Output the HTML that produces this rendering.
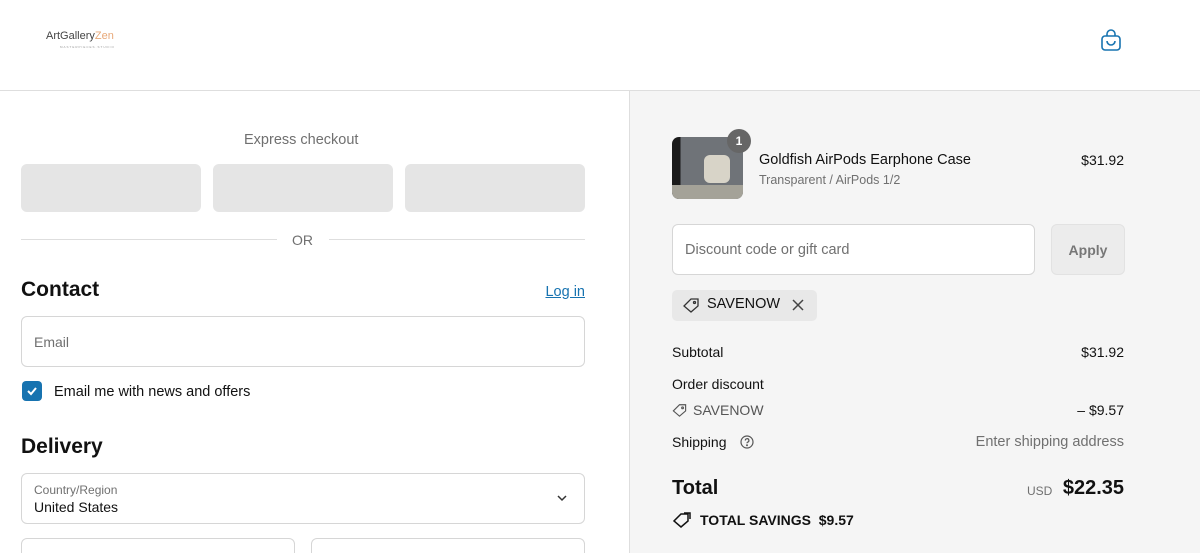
<!DOCTYPE html>
<html><head><style>
*{box-sizing:border-box;margin:0;padding:0}
html,body{width:1200px;height:553px;overflow:hidden}
body{font-family:"Liberation Sans",sans-serif;color:#000;background:#fff;position:relative}
.abs{position:absolute}
.r{position:absolute;right:76px;text-align:right}
.hdr{left:0;top:0;width:1200px;height:91px;border-bottom:1px solid #dedede;background:#fff}
.right{left:629px;top:91px;width:571px;height:462px;background:#f5f5f5;border-left:1px solid #dedede}
.btn{background:#e5e5e5;border-radius:6px;height:48px;top:164px;width:180px}
.inp{border:1px solid #d6d6d6;border-radius:6px;background:#fff}
.t{font-size:14px;color:#333}
</style></head><body>
<div class="abs hdr"></div>
<div class="abs" style="left:46px;top:30px;font-size:11px;color:#444">ArtGallery<span style="color:#e8a878">Zen</span></div>
<div class="abs" style="left:60px;top:45px;font-size:3px;color:#999;letter-spacing:1px">MASTERPIECES·STUDIO</div>
<svg class="abs" style="left:1100px;top:28px" width="22" height="24" viewBox="0 0 22 24" fill="none" stroke="#1773b0" stroke-width="1.6"><path d="M7 8V6a4 4 0 0 1 8 0v2"/><rect x="2" y="8" width="18" height="14" rx="3"/><path d="M7 13a4 4 0 0 0 8 0"/></svg>

<div class="abs" style="left:244px;top:132px;font-size:14.5px;color:#707070">Express checkout</div>
<div class="abs btn" style="left:21px"></div>
<div class="abs btn" style="left:213px"></div>
<div class="abs btn" style="left:405px"></div>
<div class="abs" style="left:21px;top:239px;width:256px;border-top:1px solid #dedede"></div>
<div class="abs" style="left:329px;top:239px;width:256px;border-top:1px solid #dedede"></div>
<div class="abs" style="left:292px;top:232px;font-size:14px;color:#707070">OR</div>
<div class="abs" style="left:21px;top:278px;font-size:21px;font-weight:bold;color:#111">Contact</div>
<div class="abs" style="right:615px;top:284px;font-size:14.5px;color:#1773b0;text-decoration:underline">Log in</div>
<div class="abs inp" style="left:21px;top:316px;width:564px;height:51px"></div>
<div class="abs" style="left:34px;top:334px;font-size:14px;color:#707070">Email</div>
<div class="abs" style="left:22px;top:381px;width:20px;height:20px;background:#1773b0;border-radius:4px"></div>
<svg class="abs" style="left:25px;top:384px" width="14" height="14" viewBox="0 0 14 14" fill="none" stroke="#fff" stroke-width="2"><path d="M3 7l3 3 5-6"/></svg>
<div class="abs t" style="left:54px;top:384px;color:#111;font-size:14.5px">Email me with news and offers</div>
<div class="abs" style="left:21px;top:435px;font-size:21px;font-weight:bold;color:#111">Delivery</div>
<div class="abs inp" style="left:21px;top:473px;width:564px;height:51px"></div>
<div class="abs" style="left:34px;top:483px;font-size:12px;color:#707070">Country/Region</div>
<div class="abs" style="left:34px;top:499px;font-size:14px;color:#111">United States</div>
<svg class="abs" style="left:555px;top:493px" width="14" height="10" viewBox="0 0 14 10" fill="none" stroke="#333" stroke-width="1.5"><path d="M3 3l4 4 4-4"/></svg>
<div class="abs inp" style="left:21px;top:538px;width:274px;height:40px"></div>
<div class="abs inp" style="left:311px;top:538px;width:274px;height:40px"></div>

<div class="abs right"></div>
<div class="abs" style="left:672px;top:137px;width:71px;height:62px;border-radius:7px;background:linear-gradient(90deg,#1a1a1a 0 12%,#6f7378 12% 100%);overflow:hidden"><div style="position:absolute;left:32px;top:18px;width:26px;height:28px;background:#d8d4c8;border-radius:6px"></div><div style="position:absolute;left:0;top:48px;width:71px;height:14px;background:#a4a298"></div></div>
<div class="abs" style="left:727px;top:129px;width:24px;height:24px;border-radius:12px;background:#666;color:#fff;font-size:12px;font-weight:bold;text-align:center;line-height:24px">1</div>
<div class="abs" style="left:759px;top:152px;font-size:14.5px;color:#111">Goldfish AirPods Earphone Case</div>
<div class="abs" style="left:759px;top:173px;font-size:12.5px;color:#707070">Transparent / AirPods 1/2</div>
<div class="r t" style="top:152px;color:#111">$31.92</div>
<div class="abs inp" style="left:672px;top:224px;width:363px;height:51px"></div>
<div class="abs" style="left:685px;top:242px;font-size:14.5px;color:#707070">Discount code or gift card</div>
<div class="abs" style="left:1051px;top:224px;width:74px;height:51px;background:#ececec;border:1px solid #e2e2e2;border-radius:6px;color:#777;font-size:14px;font-weight:bold;text-align:center;line-height:50px">Apply</div>
<div class="abs" style="left:672px;top:290px;width:145px;height:31px;background:#e8e8e8;border-radius:5px"></div>
<svg class="abs" style="left:682px;top:297px" width="18" height="16" viewBox="0 0 18 16" fill="none" stroke="#333" stroke-width="1.3"><path d="M9 2h7v7l-7 6-7-6z"/><circle cx="12.5" cy="5.5" r="1"/></svg>
<div class="abs" style="left:707px;top:296px;font-size:14.5px;color:#111">SAVENOW</div>
<svg class="abs" style="left:791px;top:298px" width="14" height="14" viewBox="0 0 14 14" stroke="#444" stroke-width="1.5"><path d="M2 2l10 10M12 2L2 12"/></svg>
<div class="abs t" style="left:672px;top:344px;color:#111">Subtotal</div>
<div class="r t" style="top:344px;color:#111">$31.92</div>
<div class="abs t" style="left:672px;top:376px;color:#111">Order discount</div>
<svg class="abs" style="left:671px;top:403px" width="17" height="14" viewBox="0 0 18 16" fill="none" stroke="#555" stroke-width="1.3"><path d="M9 2h7v7l-7 6-7-6z"/><circle cx="12.5" cy="5.5" r="1"/></svg>
<div class="abs t" style="left:693px;top:402px;color:#555">SAVENOW</div>
<div class="r t" style="top:402px;color:#111">– $9.57</div>
<div class="abs t" style="left:672px;top:434px;color:#111">Shipping</div>
<svg class="abs" style="left:740px;top:435px" width="14" height="14" viewBox="0 0 14 14" fill="none" stroke="#555" stroke-width="1.2"><circle cx="7" cy="7" r="6"/><path d="M5.3 5.5a1.8 1.8 0 1 1 2.3 1.7c-.5.2-.6.5-.6 1"/><circle cx="7" cy="10.2" r=".4"/></svg>
<div class="r t" style="top:434px;color:#707070;font-size:14.5px">Enter shipping address</div>
<div class="abs" style="left:672px;top:477px;font-size:20px;font-weight:bold;color:#111">Total</div>
<div class="abs" style="left:1027px;top:484px;font-size:12px;color:#707070">USD</div>
<div class="r" style="top:477px;font-size:20px;font-weight:bold;color:#111">$22.35</div>
<svg class="abs" style="left:672px;top:512px" width="20" height="16" viewBox="0 0 20 16" fill="none" stroke="#111" stroke-width="1.5"><path d="M9 2h7v7l-7 6-7-6z"/><path d="M12 1h6v6"/></svg>
<div class="abs" style="left:700px;top:512px;font-size:14px;font-weight:bold;color:#111">TOTAL SAVINGS&nbsp; $9.57</div>
</body></html>
